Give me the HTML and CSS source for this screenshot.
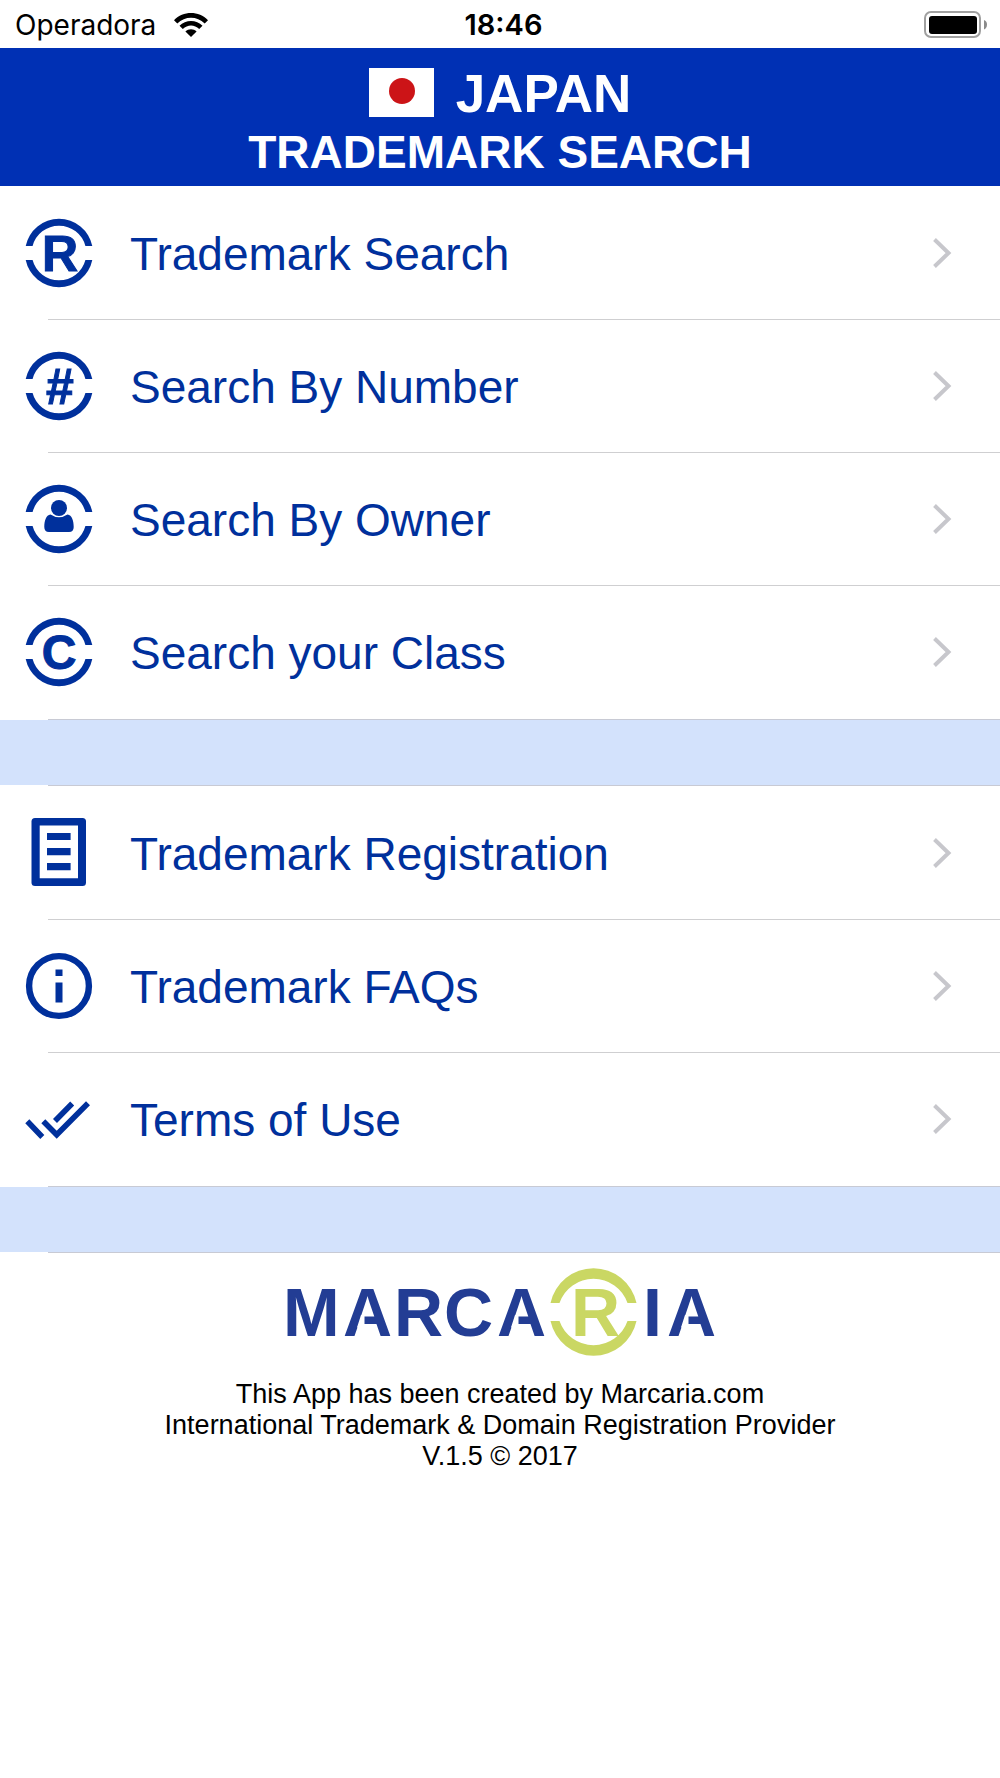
FILE: index.html
```html
<!DOCTYPE html>
<html lang="en">
<head>
<meta charset="utf-8">
<meta name="viewport" content="width=device-width, initial-scale=1">
<title>Japan Trademark Search</title>
<link rel="stylesheet" href="styles.css">
</head>
<body>
<svg class="defs" aria-hidden="true">
  <defs>
    <symbol id="ring" viewBox="-35 -35 70 70">
      <path d="M-33.3-7A34 34 0 0 1 33.3-7H26.4A27.3 27.3 0 0 0-26.4-7ZM-33.3 7A34 34 0 0 0 33.3 7H26.4A27.3 27.3 0 0 1-26.4 7Z"/>
    </symbol>
    <symbol id="chevron" viewBox="0 0 20 32">
      <path d="M2.5 2.5L16.5 16L2.5 29.5" fill="none" stroke="currentColor" stroke-width="4"/>
    </symbol>
  </defs>
</svg>

<div class="status">
  <div class="carrier">
    <span>Operadora</span>
    <svg class="wifi" viewBox="0 0 34 24" aria-label="Wi-Fi">
      <path d="M0 7.3C9-2.4 25-2.4 34 7.3L30.7 10.6C23 2.800 11 2.800 3.300 10.600Z"/>
      <path d="M5.500 12.800C11.500 6.400 22.500 6.400 28.500 12.800L25.200 16C20.500 11.300 13.500 11.300 8.800 16Z"/>
      <path d="M11.400 18.600C14.500 15.600 19.500 15.600 22.600 18.600L17 24Z"/>
    </svg>
  </div>
  <time class="clock">18:46</time>
  <svg class="battery" viewBox="0 0 64 28" aria-label="Battery full">
    <rect x="1" y="1" width="55" height="25" rx="6" fill="#fff" stroke="#a0a0a0" stroke-width="2"/>
    <rect x="5" y="5" width="48" height="18" rx="3"/>
    <path d="M60 9Q63 10 63 13.500T60 18.500Z" fill="#8a8a8a"/>
  </svg>
</div>

<header class="header">
  <h1 class="country">
    <svg class="flag" viewBox="0 0 65 49" aria-label="Flag of Japan">
      <rect width="65" height="49" fill="#fff"/>
      <circle cx="33" cy="23" r="13" fill="#cc1417"/>
    </svg>
    <span>JAPAN</span>
  </h1>
  <p class="tagline">TRADEMARK SEARCH</p>
</header>

<main>
  <ul class="menu">
    <li><a class="row" href="#search">
      <svg class="icon" viewBox="-35 -35 70 70"><use href="#ring" x="-35" y="-35" width="70" height="70"/><text class="letter" x="1" y="18">R</text></svg>
      <span class="label">Trademark Search</span>
      <svg class="chevron"><use href="#chevron"/></svg></a></li>
    <li><a class="row" href="#number">
      <svg class="icon" viewBox="-35 -35 70 70"><use href="#ring" x="-35" y="-35" width="70" height="70"/><text class="letter" x="1" y="18">#</text></svg>
      <span class="label">Search By Number</span>
      <svg class="chevron"><use href="#chevron"/></svg></a></li>
    <li><a class="row" href="#owner">
      <svg class="icon" viewBox="-35 -35 70 70"><use href="#ring" x="-35" y="-35" width="70" height="70"/><circle cy="-11" r="8"/><path d="M-8.500-4.500Q0 1 8.500-4.500C13-4 14.700 2 14.700 8Q14.700 13 10 13H-10Q-14.700 13-14.700 8C-14.700 2-13-4-8.500-4.500Z"/></svg>
      <span class="label">Search By Owner</span>
      <svg class="chevron"><use href="#chevron"/></svg></a></li>
    <li><a class="row" href="#class">
      <svg class="icon" viewBox="-35 -35 70 70"><use href="#ring" x="-35" y="-35" width="70" height="70"/><text class="letter letter-c" x="0" y="17">C</text></svg>
      <span class="label">Search your Class</span>
      <svg class="chevron"><use href="#chevron"/></svg></a></li>
  </ul>
  <hr class="rule">
  <div class="band"></div>
  <hr class="rule">
  <ul class="menu">
    <li><a class="row" href="#registration">
      <svg class="icon" viewBox="-35 -35 70 70"><rect x="-27.500" y="-35" width="54.500" height="68" rx="3.500"/><path fill="#fff" d="M-19.300-27.500H19V25.300H-19.300Z"/><path d="M-12-20H11.600V-13H-12ZM-12-5H11.600V2.300H-12ZM-12 10H11.600V17.300H-12Z"/></svg>
      <span class="label">Trademark Registration</span>
      <svg class="chevron"><use href="#chevron"/></svg></a></li>
    <li><a class="row" href="#faqs">
      <svg class="icon" viewBox="-35 -35 70 70"><circle r="29.900" fill="none" stroke="currentColor" stroke-width="6.400"/><path d="M-3.500-16.600H3.500V-10H-3.500ZM-3.500-3.400H3.500V16.400H-3.500Z"/></svg>
      <span class="label">Trademark FAQs</span>
      <svg class="chevron"><use href="#chevron"/></svg></a></li>
    <li><a class="row" href="#terms">
      <svg class="icon" viewBox="-35 -35 70 70"><path fill="none" stroke="currentColor" stroke-width="5.600" d="M-31.700 2.300L-16.700 18M-15.700 2.300L-2.300 15.700L29-15.700M-4 2L13.200-15.500"/></svg>
      <span class="label">Terms of Use</span>
      <svg class="chevron"><use href="#chevron"/></svg></a></li>
  </ul>
  <hr class="rule">
  <div class="band"></div>
  <hr class="rule">
</main>

<footer class="footer">
  <svg class="logo" viewBox="0 0 440 100" role="img" aria-label="Marcaria">
    <text class="wordmark" y="76" x="3 63 114 164 217">MARCA</text>
    <text class="wordmark" y="76" x="363 387">IA</text>
    <path fill="#fff" d="M77 67.500H84.500V55H81ZM231 67.500H238.500V55H235ZM401 67.500H408.500V55H405Z"/>
    <g class="mark">
      <path d="M270.500 43A44 44 0 0 1 356.500 43H347.500A36 36 0 0 0 279.500 43ZM270.500 61A44 44 0 0 0 356.500 61H347.500A36 36 0 0 1 279.500 61Z"/>
      <text class="wordmark-r" x="291" y="76">R</text>
    </g>
  </svg>
  <p class="credits">This App has been created by Marcaria.com<br>International Trademark &amp; Domain Registration Provider<br>V.1.5 © 2017</p>
</footer>
</body>
</html>
```
FILE: styles.css
```css
* { box-sizing: border-box; }

body {
  margin: 0;
  background: #fff;
  color: #000;
  font-family: "Liberation Sans", Arial, sans-serif;
}

.defs { display: block; width: 0; height: 0; }

.status {
  display: grid;
  grid-template-columns: 1fr auto 1fr;
  align-items: center;
  height: 48px;
  padding: 1px 12px 0 15px;
  font-family: Inter, "Liberation Sans", sans-serif;
  font-size: 28px;
  line-height: 48px;
}
.carrier { display: flex; align-items: center; gap: 18px; }
.wifi { width: 34px; height: 24px; }
.clock { padding-left: 4px; font-size: 29px; font-weight: 600; }
.battery { justify-self: end; width: 64px; height: 28px; }

.header {
  padding: 15px 16px 7px;
  background: #0030b4;
  color: #fff;
  text-align: center;
}
.country {
  display: flex;
  justify-content: center;
  align-items: center;
  gap: 22px;
  margin: 0;
  font-size: 53px;
  line-height: 62px;
}
.flag { width: 65px; height: 49px; margin-bottom: 4px; }
.tagline {
  margin: 0;
  font-size: 46px;
  font-weight: 700;
  line-height: 54px;
}

.menu { margin: 0; padding: 1px 0; list-style: none; }
.menu li + li::before {
  content: "";
  display: block;
  height: 1px;
  margin-left: 48px;
  background: #cfcfd1;
}
.row {
  display: flex;
  align-items: center;
  height: 132px;
  padding: 0 48px 0 24px;
  color: #00309c;
  text-decoration: none;
}
.icon { width: 70px; height: 70px; fill: currentColor; }
.letter {
  font-size: 50px;
  font-weight: 700;
  text-anchor: middle;
  stroke: currentColor;
  stroke-width: 1px;
}
.letter-c { font-size: 48px; }
.label { flex: 1; padding: 2px 0 0 36px; font-size: 46px; line-height: 52px; }
.chevron { width: 20px; height: 32px; color: #c7c7cc; }

.rule {
  height: 1px;
  margin: 0 0 0 48px;
  border: 0;
  background: #c8cad4;
}
.band { height: 65px; background: #d3e2fc; }

.footer {
  display: flex;
  flex-direction: column;
  align-items: center;
  gap: 19px;
  padding: 7px 16px;
}
.logo { width: 440px; height: 100px; }
.wordmark, .wordmark-r { font-size: 68px; font-weight: 700; }
.wordmark { fill: #233d94; }
.mark { fill: #cad763; }
.credits {
  margin: 0;
  font-size: 27px;
  line-height: 31px;
  text-align: center;
}
```
